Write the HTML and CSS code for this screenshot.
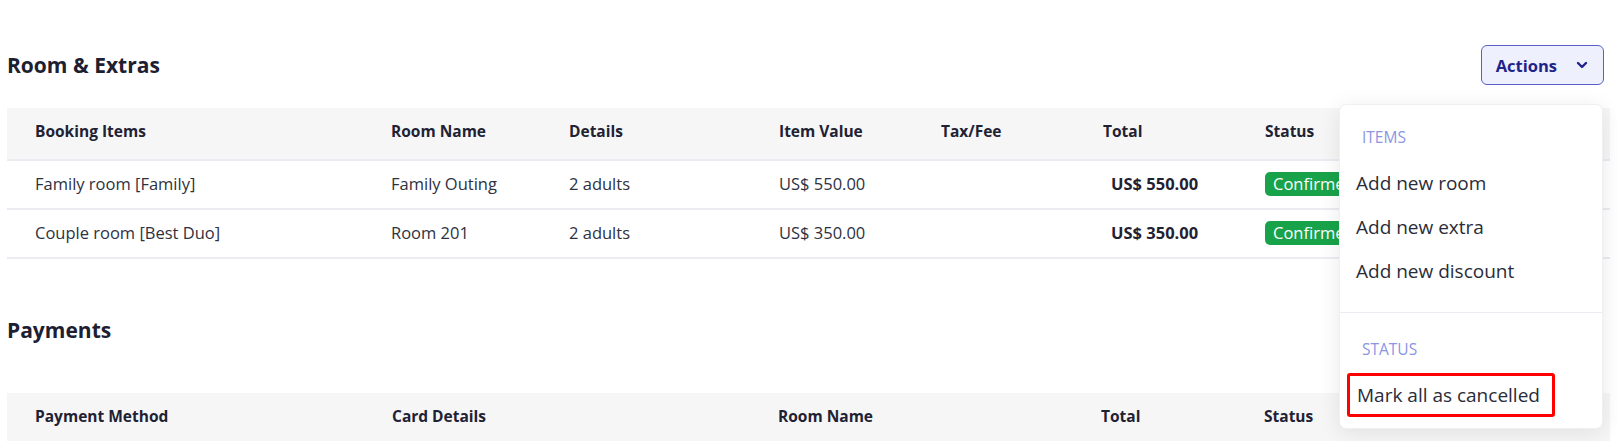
FILE: index.html
```html
<!DOCTYPE html>
<html lang="en">
<head>
    <meta charset="UTF-8">
    <title>Booking - Room &amp; Extras</title>
    <link rel="stylesheet" href="styles.css">
</head>
<body>
    <div class="page">
        <div class="section-head first">
            <h2>Room &amp; Extras</h2>
            <div class="actions">
                <button class="actions-btn">
                    Actions
                    <svg width="14" height="14" viewBox="0 0 14 14"><path d="M3 5l4 4 4-4" fill="none" stroke="currentColor" stroke-width="2.4" stroke-linecap="round" stroke-linejoin="round"/></svg>
                </button>
                <div class="menu">
                    <div class="menu-label">ITEMS</div>
                    <div class="menu-item">Add new room</div>
                    <div class="menu-item">Add new extra</div>
                    <div class="menu-item">Add new discount</div>
                    <div class="menu-divider"></div>
                    <div class="menu-label">STATUS</div>
                    <div class="menu-item marked">Mark all as cancelled</div>
                </div>
            </div>
        </div>

        <table class="grid rooms">
            <thead>
                <tr>
                    <th class="c1">Booking Items</th>
                    <th class="c2">Room Name</th>
                    <th class="c3">Details</th>
                    <th class="c4">Item Value</th>
                    <th class="c5">Tax/Fee</th>
                    <th class="c6">Total</th>
                    <th>Status</th>
                </tr>
            </thead>
            <tbody>
                <tr>
                    <td>Family room [Family]</td>
                    <td>Family Outing</td>
                    <td>2 adults</td>
                    <td>US$ 550.00</td>
                    <td></td>
                    <td class="amount">US$ 550.00</td>
                    <td><span class="badge">Confirmed</span></td>
                </tr>
                <tr>
                    <td>Couple room [Best Duo]</td>
                    <td>Room 201</td>
                    <td>2 adults</td>
                    <td>US$ 350.00</td>
                    <td></td>
                    <td class="amount">US$ 350.00</td>
                    <td><span class="badge">Confirmed</span></td>
                </tr>
            </tbody>
        </table>

        <div class="section-head second">
            <h2>Payments</h2>
        </div>

        <table class="grid payments">
            <thead>
                <tr>
                    <th class="p1">Payment Method</th>
                    <th class="p2">Card Details</th>
                    <th class="p3">Room Name</th>
                    <th class="p4">Total</th>
                    <th>Status</th>
                </tr>
            </thead>
        </table>
    </div>
</body>
</html>
```

FILE: styles.css
```css
body {
    margin: 0;
    font-family: "Open Sans", "Noto Sans", sans-serif;
    color: #2e3140;
    background: #fff;
}
.page {
    padding: 0 7px;
}
.section-head {
    display: flex;
    justify-content: space-between;
    align-items: center;
    height: 40px;
}
.section-head.first {
    margin-top: 45px;
}
.section-head.second {
    margin-top: 51px;
}
.section-head h2 {
    margin: 0;
    font-size: 21px;
    font-weight: 700;
    color: #1d2030;
}
.actions {
    position: relative;
    margin-right: 6px;
}
.actions-btn {
    display: flex;
    align-items: center;
    gap: 18px;
    height: 40px;
    padding: 0 14px;
    background: #eef0fd;
    border: 1.5px solid #5a5fc8;
    border-radius: 6px;
    color: #1f238a;
    font-family: inherit;
    font-size: 16.5px;
    font-weight: 700;
}
.menu {
    position: absolute;
    top: 59px;
    right: 1px;
    width: 262px;
    background: #fff;
    border: 1px solid #efeff4;
    border-radius: 7px;
    box-shadow: 0 4px 22px rgba(0, 0, 0, 0.09);
    padding: 18px 0 11px;
    z-index: 5;
}
.menu-label {
    padding-left: 22px;
    height: 28px;
    line-height: 28px;
    margin-bottom: 10px;
    font-size: 15.5px;
    color: #8b95e2;
}
.menu-item {
    padding-left: 16px;
    height: 44px;
    line-height: 44px;
    font-size: 19px;
    color: #2a2c38;
}
.menu-divider {
    height: 1px;
    background: #ececf2;
    margin: 19px 0 22px;
}
.menu-item.marked {
    display: inline-block;
    margin-left: 7px;
    padding: 0 12px 0 7px;
    height: 38px;
    line-height: 38px;
    border: 3px solid #ff0000;
    border-radius: 3px;
}
.grid {
    width: 100%;
    border-collapse: collapse;
    table-layout: fixed;
    margin-top: 23px;
}
.grid th,
.grid td {
    box-sizing: border-box;
    padding: 0 0 2px 28px;
    border-bottom: 2px solid #ebecf1;
}
.grid th {
    background: #f6f6f7;
    height: 52px;
    padding-bottom: 5px;
    text-align: left;
    font-size: 15.5px;
    font-weight: 700;
    color: #1f2233;
}
.grid td {
    height: 49px;
    font-size: 16.5px;
}
.grid .c1 { width: 356px; }
.grid .c2 { width: 178px; }
.grid .c3 { width: 210px; }
.grid .c4 { width: 162px; }
.grid .c5 { width: 162px; }
.grid .c6 { width: 162px; }
.grid td.amount {
    padding-left: 36px;
    font-weight: 700;
    color: #1f2233;
}
.badge {
    display: inline-block;
    background: #18a34a;
    color: #fff;
    height: 24px;
    line-height: 24px;
    padding: 0 8px;
    border-radius: 5px;
    font-size: 16.5px;
}
.payments {
    margin-top: 43px;
}
.grid .p1 { width: 357px; }
.grid .p2 { width: 386px; }
.grid .p3 { width: 323px; }
.grid .p4 { width: 163px; }
```
